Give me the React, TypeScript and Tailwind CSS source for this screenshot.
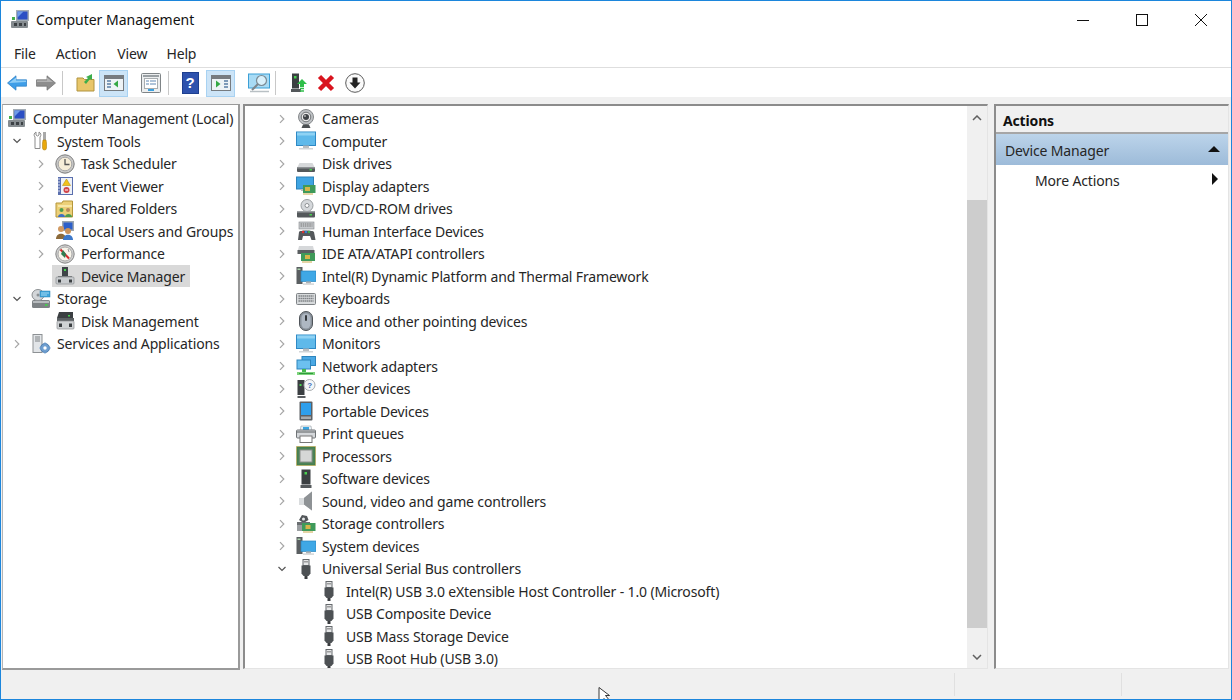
import type { ReactNode } from 'react';

type IconProps = { children: ReactNode; className?: string };

function Ico({ children, className = 'h-5 w-5 shrink-0' }: IconProps) {
  return (
    <svg viewBox="0 0 20 20" className={className}>
      {children}
    </svg>
  );
}

const MgmtIcon = () => (
  <Ico>
    <rect x="6" y="0" width="13" height="11" fill="#a3acb5" />
    <rect x="7.5" y="1.5" width="10" height="8" fill="#2b4fc4" />
    <path d="M7.5 1.5h6l-6 6z" fill="#6f9be8" />
    <rect x="1" y="11" width="17" height="7" rx="1" fill="#868c90" />
    <rect x="4" y="13" width="3" height="3" fill="#3c4145" />
    <rect x="9" y="13" width="3" height="3" fill="#3c4145" />
    <rect x="14" y="13" width="2" height="3" fill="#3c4145" />
    <rect x="2" y="7" width="3" height="3" fill="#46b04a" />
  </Ico>
);

const ToolsIcon = () => (
  <Ico>
    <path d="M5 1v3l1.5 1L8 4V1c2 1 2.5 3.5 1 5v11.5H4V6C2.5 4.500 3 2 5 1z" fill="#fff" stroke="#8b8b8b" />
    <path d="M12 1h3v8h-3z" fill="#a9a9a9" />
    <path d="M12 9h3l.5 3v5a2 2 0 0 1-4 0v-5z" fill="#e9a80c" stroke="#a87800" strokeWidth=".5" />
  </Ico>
);

const ClockIcon = () => (
  <Ico>
    <circle cx="10" cy="10" r="9.2" fill="#c9c9c9" stroke="#7c7c7c" />
    <circle cx="10" cy="10" r="6.8" fill="#f6edd8" stroke="#a7a7a7" />
    <path d="M10 5v5.500h4.500" fill="none" stroke="#555" strokeWidth="1.300" />
  </Ico>
);

const EventIcon = () => (
  <Ico>
    <rect x="3" y="1" width="15" height="18" fill="#5a6fae" />
    <rect x="6" y="2" width="11" height="16" fill="#eef1f7" />
    <path d="M3 3h2M3 6h2M3 9h2M3 12h2M3 15h2" stroke="#d8def0" />
    <path d="M11.500 3l4 6.500h-8z" fill="#f2c21b" stroke="#a88400" strokeWidth=".5" />
    <circle cx="11.500" cy="14" r="3" fill="#d1444a" />
    <path d="M10 14h3" stroke="#fff" />
  </Ico>
);

const SharedIcon = () => (
  <Ico>
    <path d="M1 4h6l1-2h9.500v16H1z" fill="#ecd078" stroke="#b5963a" />
    <rect x="3" y="6" width="14" height="2" fill="#f7e7a8" />
    <circle cx="6.500" cy="11" r="2" fill="#4d9d4d" />
    <path d="M3 18c0-4 7-4 7 0z" fill="#3f6fc2" />
    <circle cx="13" cy="11" r="2" fill="#b98a5a" />
    <path d="M10 18c0-4 7-4 7 0z" fill="#4d9d4d" />
  </Ico>
);

const UsersIcon = () => (
  <Ico>
    <rect x="7" y="0" width="12" height="10" fill="#9ca6b0" />
    <rect x="8.500" y="1.500" width="9" height="7" fill="#2c5fc9" />
    <circle cx="6" cy="8" r="3" fill="#d19a62" />
    <path d="M1 18c0-7 10-7 10 0z" fill="#8c6a3a" />
    <circle cx="13" cy="10" r="3" fill="#c9925a" />
    <path d="M8 19c0-7 10-7 10 0z" fill="#3d78c9" />
  </Ico>
);

const PerfIcon = () => (
  <Ico>
    <circle cx="10" cy="10" r="9.200" fill="#d0d0d0" stroke="#858585" />
    <circle cx="10" cy="10" r="7" fill="#f8f4ea" stroke="#a8a8a8" />
    <path d="M5.500 5.500L14 14.500" stroke="#d42a2a" strokeWidth="2" />
    <path d="M6 10l2-4 3 4-1 4z" fill="#2f7d4f" />
    <path d="M13 5l1 3" stroke="#999" />
  </Ico>
);

const DevMgrIcon = () => (
  <Ico>
    <rect x="7" y="1" width="6" height="9" fill="#3e4347" />
    <rect x="9" y="3" width="2" height="2" fill="#45d34f" />
    <rect x="3" y="10" width="14" height="1" fill="#75797c" />
    <rect x="1" y="11" width="18" height="7" rx="1" fill="#c9cccf" stroke="#8a8e91" strokeWidth=".7" />
    <rect x="3" y="13.500" width="3" height="3" fill="#3c4043" />
    <rect x="14" y="13.500" width="3" height="3" fill="#3c4043" />
  </Ico>
);

const StorageIcon = () => (
  <Ico>
    <rect x="1" y="11" width="18" height="8" rx="1.500" fill="#7d8285" />
    <rect x="2" y="12" width="16" height="2" fill="#b7bbbe" />
    <rect x="14" y="15" width="2.500" height="2" fill="#48c850" />
    <ellipse cx="7" cy="6" rx="6" ry="5.500" fill="#d3d6d9" stroke="#8b8f92" />
    <circle cx="7" cy="6" r="1.500" fill="#8d9194" />
    <rect x="9" y="2" width="10" height="6" fill="#3fa6dc" stroke="#2a7fb0" strokeWidth=".5" />
    <path d="M10 4h8M10 6h6" stroke="#d0edf9" strokeWidth=".7" />
  </Ico>
);

const DiskMgmtIcon = () => (
  <Ico>
    <path d="M4 1h14v6H2z" fill="#3b3f42" />
    <rect x="2" y="7" width="17" height="3" fill="#5b6063" />
    <rect x="13" y="4" width="2" height="1.500" fill="#46d04f" />
    <rect x="2" y="10" width="17" height="8" rx="1" fill="#cfd2d4" stroke="#8b8e91" strokeWidth=".7" />
    <rect x="4" y="12.500" width="3" height="3.500" fill="#3c4043" />
    <rect x="14" y="12.500" width="3" height="3.500" fill="#3c4043" />
  </Ico>
);

const ServicesIcon = () => (
  <Ico>
    <rect x="2" y="0.500" width="9" height="18" fill="#e2e5e8" stroke="#8d9194" />
    <path d="M4 3h5M4 5h5M4 7h5" stroke="#7e8285" />
    <circle cx="14" cy="14" r="4.500" fill="#6f9fd0" stroke="#4f7eb0" />
    <circle cx="14" cy="14" r="1.700" fill="#fff" />
    <path d="M14 8.500v2M14 17.500v2M8.500 14h2M17.500 14h2" stroke="#6f9fd0" strokeWidth="1.500" />
  </Ico>
);

const CameraIcon = () => (
  <Ico>
    <circle cx="10" cy="8" r="7.500" fill="#bfc2c5" stroke="#85888b" />
    <circle cx="10" cy="8" r="4.800" fill="#e8e8e8" stroke="#6f7376" />
    <circle cx="10" cy="8" r="3" fill="#3f4347" />
    <circle cx="9" cy="7" r=".8" fill="#fff" />
    <path d="M7 15.500h6l1.500 3.500h-9z" fill="#4c5053" />
  </Ico>
);

const MonitorIcon = () => (
  <Ico>
    <rect x="0.500" y="1" width="19" height="13.500" fill="#5fb9ea" stroke="#2e89c5" />
    <path d="M1 1.500h18v3H1z" fill="#8fd2f4" />
    <rect x="7" y="14.500" width="6" height="2.500" fill="#b9bdc0" />
    <rect x="3" y="17" width="14" height="1.500" fill="#d2d5d8" />
  </Ico>
);

const DiskIcon = () => (
  <Ico>
    <path d="M3.500 9h13l2 4H1.500z" fill="#d6d8da" />
    <rect x="1" y="13" width="18" height="5" rx="1" fill="#54585b" />
    <rect x="1" y="13" width="18" height="1.500" fill="#8d9194" />
    <rect x="13.500" y="15" width="2.500" height="1.500" fill="#48d050" />
  </Ico>
);

const DisplayIcon = () => (
  <Ico>
    <rect x="0.500" y="1" width="17" height="12" fill="#3fa4e2" stroke="#2d82b9" />
    <rect x="5" y="13" width="6" height="2" fill="#b9bdc0" />
    <rect x="7" y="9" width="12.500" height="8" fill="#3f9a5a" />
    <rect x="9" y="11" width="5" height="4" fill="#d6b54a" />
    <path d="M8 17v2M10 17v2M12 17v2M14 17v2M16 17v2" stroke="#caa84a" />
  </Ico>
);

const DvdIcon = () => (
  <Ico>
    <circle cx="11" cy="6.500" r="6" fill="#d5d8db" stroke="#9a9ea1" />
    <circle cx="11" cy="6.500" r="2" fill="#fff" stroke="#8d9194" />
    <rect x="1" y="12" width="18" height="6.500" rx="1" fill="#54585b" />
    <rect x="1" y="12" width="18" height="1.500" fill="#9a9ea1" />
    <rect x="13.500" y="15" width="2.500" height="1.500" fill="#48d050" />
  </Ico>
);

const HidIcon = () => (
  <Ico>
    <rect x="3" y="1" width="15" height="7" fill="#c6c9cc" stroke="#85898c" strokeWidth=".6" />
    <path d="M4.500 3h12M4.500 5h12" stroke="#777" strokeDasharray="1.500 .7" />
    <path d="M2 19l1-8c.3-2 14-2 15 0l1.500 8h-4l-1.500-4H7l-1 4z" fill="#54585b" />
    <circle cx="7" cy="11" r="1.200" fill="#d33" />
    <circle cx="10" cy="11" r="1.200" fill="#3a7fd0" />
    <circle cx="13" cy="11" r="1.200" fill="#3cae4c" />
  </Ico>
);

const IdeIcon = () => (
  <Ico>
    <path d="M3 2h14l1 4H2z" fill="#d6d8da" />
    <rect x="1.500" y="6" width="17" height="4" fill="#5a5e61" />
    <rect x="5" y="9" width="14" height="8" fill="#3f9a5a" />
    <rect x="9" y="11" width="5" height="4" fill="#d6b54a" />
    <path d="M7 17v2M9 17v2M11 17v2M13 17v2M15 17v2" stroke="#caa84a" />
  </Ico>
);

const SystemIcon = () => (
  <Ico>
    <rect x="0.500" y="1" width="6" height="17" fill="#5a5e61" />
    <rect x="1.500" y="2.500" width="3" height="1.500" fill="#a8d0a8" />
    <rect x="5" y="5" width="15" height="10.500" fill="#3fa8e6" stroke="#2a85bd" strokeWidth=".7" />
    <rect x="10" y="15.500" width="5" height="2" fill="#aeb2b5" />
    <rect x="7" y="17.500" width="11" height="1.200" fill="#c9ccce" />
  </Ico>
);

const KeyboardIcon = () => (
  <Ico>
    <rect x="0.500" y="4.500" width="19" height="11" rx="1" fill="#d7dadc" stroke="#7f8386" />
    <path d="M2.500 7h15M2.500 9.500h15M2.500 12h15" stroke="#777b7e" strokeWidth="1.300" strokeDasharray="1.400 .6" />
  </Ico>
);

const MouseIcon = () => (
  <Ico>
    <rect x="3.500" y="0.500" width="13" height="19" rx="6.500" fill="#8b939c" stroke="#4f5459" />
    <rect x="5.500" y="2.500" width="9" height="15" rx="4.500" fill="#aeb7c2" />
    <rect x="9" y="4" width="2" height="6" rx="1" fill="#34383c" />
  </Ico>
);

const NetworkIcon = () => (
  <Ico>
    <rect x="6" y="0.500" width="13.500" height="9" fill="#4aa8e4" stroke="#2e85bd" />
    <rect x="1" y="4" width="13.500" height="9" fill="#6cc0ef" stroke="#2e85bd" />
    <rect x="6" y="13" width="4" height="3" fill="#45b84f" />
    <rect x="1" y="16" width="18" height="3" fill="#7dd37c" />
    <path d="M3 17.500h14" stroke="#2f9a3c" />
  </Ico>
);

const OtherIcon = () => (
  <Ico>
    <rect x="1.500" y="1" width="7" height="15" fill="#3b3f42" />
    <rect x="3.500" y="5" width="2" height="2" fill="#48d050" />
    <rect x="1.500" y="17" width="8" height="2" fill="#5a5e61" />
    <circle cx="13.500" cy="6" r="5.500" fill="#f4f6f8" stroke="#a8acaf" />
    <text x="13.500" y="9" fontSize="8" fontWeight="700" fill="#3a6fb8" textAnchor="middle" fontFamily="Liberation Sans, sans-serif">?</text>
  </Ico>
);

const PortableIcon = () => (
  <Ico>
    <rect x="3.500" y="0.500" width="13" height="19" rx="1" fill="#5c6064" />
    <rect x="5" y="2" width="10" height="12" fill="#2e9fec" />
    <rect x="5" y="15.500" width="10" height="2.500" fill="#a7abae" />
  </Ico>
);

const PrintIcon = () => (
  <Ico>
    <path d="M5 2h10l1 5H4z" fill="#e8f2f8" stroke="#8d9194" strokeWidth=".5" />
    <rect x="7" y="3" width="6" height="3" fill="#3aa4e0" />
    <rect x="0.500" y="6" width="19" height="8" rx="1" fill="#d4d7da" stroke="#6f7376" />
    <rect x="4" y="12" width="12" height="6.500" fill="#fff" stroke="#777" />
    <path d="M1 8h18" stroke="#5a5e61" />
  </Ico>
);

const CpuIcon = () => (
  <Ico>
    <rect x="0.500" y="0.500" width="19" height="19" fill="#3f7d4a" stroke="#c8a23a" strokeDasharray="1 1" />
    <rect x="1.500" y="1.500" width="17" height="17" fill="#4c8256" />
    <rect x="4" y="4" width="12" height="12" fill="#d5d7d6" stroke="#8c908c" />
  </Ico>
);

const SoftwareIcon = () => (
  <Ico>
    <rect x="5.500" y="0.500" width="9" height="15" fill="#3b3f42" />
    <rect x="8.500" y="3" width="2.500" height="2.500" fill="#48d050" />
    <rect x="4.500" y="16" width="11" height="3" fill="#54585b" />
  </Ico>
);

const SoundIcon = () => (
  <Ico>
    <path d="M3 7h5l8-6.500v19L8 13.500H3z" fill="#b5b9bc" />
    <path d="M8 7l8-6.500v19L8 13.500z" fill="#8e9295" />
    <rect x="3" y="7" width="5" height="6.500" fill="#d9dcde" />
  </Ico>
);

const StorageCtlIcon = () => (
  <Ico>
    <path d="M6 1l5 1 1.500 4-5 3-4.500-3z" fill="#53575a" />
    <circle cx="7.500" cy="5" r="1.500" fill="#e6e8ea" />
    <rect x="1" y="8" width="13" height="3" fill="#6a6e71" />
    <rect x="6" y="9" width="13.500" height="8" fill="#3f9a5a" />
    <rect x="9.500" y="11" width="5" height="4" fill="#d6b54a" />
    <path d="M8 17v2M10 17v2M12 17v2M14 17v2M16 17v2" stroke="#caa84a" />
    <rect x="1" y="11" width="5" height="6" fill="#9a9ea1" />
  </Ico>
);

const UsbIcon = () => (
  <Ico>
    <rect x="7" y="0.500" width="6" height="6" fill="#e6e7e8" stroke="#65696c" />
    <rect x="8.500" y="2" width="1" height="1.500" fill="#555" />
    <rect x="10.500" y="2" width="1" height="1.500" fill="#555" />
    <path d="M5.500 6.500h9v8l-2 2.500h-5l-2-2.500z" fill="#4d5154" />
    <rect x="8.500" y="17" width="3" height="3" fill="#3a3d40" />
  </Ico>
);

type Row = { label: string; icon: ReactNode; open?: boolean; noChevron?: boolean; selected?: boolean };

const leftLevel2Top: Row[] = [
  { label: 'Task Scheduler', icon: <ClockIcon /> },
  { label: 'Event Viewer', icon: <EventIcon /> },
  { label: 'Shared Folders', icon: <SharedIcon /> },
  { label: 'Local Users and Groups', icon: <UsersIcon /> },
  { label: 'Performance', icon: <PerfIcon /> },
  { label: 'Device Manager', icon: <DevMgrIcon />, noChevron: true, selected: true },
];

const devices: Row[] = [
  { label: 'Cameras', icon: <CameraIcon /> },
  { label: 'Computer', icon: <MonitorIcon /> },
  { label: 'Disk drives', icon: <DiskIcon /> },
  { label: 'Display adapters', icon: <DisplayIcon /> },
  { label: 'DVD/CD-ROM drives', icon: <DvdIcon /> },
  { label: 'Human Interface Devices', icon: <HidIcon /> },
  { label: 'IDE ATA/ATAPI controllers', icon: <IdeIcon /> },
  { label: 'Intel(R) Dynamic Platform and Thermal Framework', icon: <SystemIcon /> },
  { label: 'Keyboards', icon: <KeyboardIcon /> },
  { label: 'Mice and other pointing devices', icon: <MouseIcon /> },
  { label: 'Monitors', icon: <MonitorIcon /> },
  { label: 'Network adapters', icon: <NetworkIcon /> },
  { label: 'Other devices', icon: <OtherIcon /> },
  { label: 'Portable Devices', icon: <PortableIcon /> },
  { label: 'Print queues', icon: <PrintIcon /> },
  { label: 'Processors', icon: <CpuIcon /> },
  { label: 'Software devices', icon: <SoftwareIcon /> },
  { label: 'Sound, video and game controllers', icon: <SoundIcon /> },
  { label: 'Storage controllers', icon: <StorageCtlIcon /> },
  { label: 'System devices', icon: <SystemIcon /> },
  { label: 'Universal Serial Bus controllers', icon: <UsbIcon />, open: true },
];

const usbDevices = [
  'Intel(R) USB 3.0 eXtensible Host Controller - 1.0 (Microsoft)',
  'USB Composite Device',
  'USB Mass Storage Device',
  'USB Root Hub (USB 3.0)',
];

function Chevron({ open = false }: { open?: boolean }) {
  return (
    <svg viewBox="0 0 10 10" className="h-[10px] w-[10px] shrink-0">
      {open ? (
        <path d="M1.500 3l3.500 3.500L8.500 3" fill="none" stroke="#555" strokeWidth="1.200" />
      ) : (
        <path d="M3 1.200L6.800 5 3 8.800" fill="none" stroke="#a6a6a6" strokeWidth="1.200" />
      )}
    </svg>
  );
}

function LeftRow({ row, level }: { row: Row; level: 1 | 2 }) {
  return (
    <div className={`flex h-[22.5px] items-center ${level === 1 ? 'pl-[9px]' : 'pl-[33px]'}`}>
      {row.noChevron ? (
        <span className="w-[10px] shrink-0" />
      ) : (
        <Chevron open={row.open} />
      )}
      <div
        className={`flex h-[22.5px] items-center pr-[5px] ${
          row.selected ? 'bg-[#d9d9d9]' : ''
        } ${level === 1 ? 'ml-[8px] pl-[1px]' : 'ml-[6px] pl-[3px]'}`}
      >
        {row.icon}
        <span className="ml-[6px] whitespace-nowrap">{row.label}</span>
      </div>
    </div>
  );
}

function DeviceRow({ row }: { row: Row }) {
  return (
    <div className="flex h-[22.5px] items-center pl-[32px]">
      <Chevron open={row.open} />
      <span className="ml-[9px]">{row.icon}</span>
      <span className="ml-[6px] whitespace-nowrap">{row.label}</span>
    </div>
  );
}

function ToolBtn({ children, active = false, className = '' }: { children: ReactNode; active?: boolean; className?: string }) {
  return (
    <div
      className={`flex h-[27px] items-center justify-center ${
        active ? 'border border-[#a8d2f2] bg-[#cce4f7]' : ''
      } ${className}`}
    >
      {children}
    </div>
  );
}

const Sep = ({ className = '' }: { className?: string }) => (
  <div className={`h-[24px] w-px bg-[#c8c8c8] ${className}`} />
);

export default function App() {
  return (
    <div className="relative flex h-[700px] w-[1232px] flex-col overflow-hidden border border-[#1c86dc] bg-white font-['Noto_Sans','Open_Sans',sans-serif] text-[14px] tracking-[-0.15px] text-[#262626]">
      {/* title bar */}
      <div className="flex h-[37px] items-center">
        <span className="ml-[9px]"><MgmtIcon /></span>
        <span className="ml-[6px] tracking-[0px] text-[#111]">Computer Management</span>
        <div className="ml-auto flex items-center">
          <svg viewBox="0 0 12 12" className="mr-[47px] h-[12px] w-[12px]"><path d="M0 6.500h12" stroke="#111" /></svg>
          <svg viewBox="0 0 12 12" className="mr-[47px] h-[12px] w-[12px]"><rect x=".5" y=".5" width="11" height="11" fill="none" stroke="#111" /></svg>
          <svg viewBox="0 0 12 12" className="mr-[24px] h-[12px] w-[12px]"><path d="M0 0l12 12M12 0L0 12" stroke="#111" /></svg>
        </div>
      </div>

      {/* menu */}
      <div className="flex h-[29px] items-center pl-[13px] pt-[1px]">
        <span>File</span>
        <span className="ml-[20px]">Action</span>
        <span className="ml-[21px]">View</span>
        <span className="ml-[19px]">Help</span>
      </div>

      {/* toolbar */}
      <div className="flex h-[30px] items-center border-t border-[#dedede] pl-[4px] pt-[1px]">
        <ToolBtn className="w-[24px]">
          <svg viewBox="0 0 20 16" className="h-[16px] w-[20px]">
            <path d="M0.500 8L9 .8v4h10.500v6.400H9v4z" fill="#3f9ee8" stroke="#2a7cc4" strokeWidth=".7" />
            <path d="M2 8L9 2.500v3h10v1.500z" fill="#8fcdf6" />
          </svg>
        </ToolBtn>
        <ToolBtn className="ml-[5px] w-[24px]">
          <svg viewBox="0 0 20 16" className="h-[16px] w-[20px]">
            <path d="M19.500 8L11 .8v4H.5v6.400H11v4z" fill="#8d8d8d" stroke="#6f6f6f" strokeWidth=".7" />
            <path d="M1 5.500h10v-3l6 4.500H1z" fill="#b2b2b2" />
          </svg>
        </ToolBtn>
        <Sep className="ml-[4px]" />
        <ToolBtn className="ml-[11px] w-[24px]">
          <svg viewBox="0 0 20 20" className="h-[20px] w-[20px]">
            <path d="M1 5h6l1.500 1.500H18V18H1z" fill="#e8c66a" stroke="#b0933f" />
            <path d="M8 9l4-4-2-1 6-3v6l-2-1-4 5z" fill="#3cae4c" />
          </svg>
        </ToolBtn>
        <ToolBtn active className="ml-[1px] w-[29px]">
          <svg viewBox="0 0 20 16" className="h-[16px] w-[20px]">
            <rect x=".5" y=".5" width="19" height="15" fill="#eef3f6" stroke="#767b80" />
            <rect x="1" y="1" width="18" height="3" fill="#767b80" />
            <path d="M3 6h4M3 9h4M3 12h4" stroke="#5a7fa5" strokeWidth="1.500" />
            <path d="M14 5.500v7L9.500 9z" fill="#35a845" />
          </svg>
        </ToolBtn>
        <ToolBtn className="ml-[13px] w-[20px]">
          <svg viewBox="0 0 20 20" className="h-[20px] w-[20px]">
            <rect x=".5" y=".5" width="19" height="19" rx="1" fill="#eceeef" stroke="#7f8487" />
            <rect x="2" y="2" width="16" height="2" fill="#9aa0a4" />
            <rect x="3.500" y="5.500" width="13" height="10" fill="#fff" stroke="#a8adb0" />
            <path d="M5 8h3M9 8h6M5 11h3M9 11h6" stroke="#5f87b3" />
            <rect x="7" y="16" width="6" height="2" fill="#3aa0e0" />
          </svg>
        </ToolBtn>
        <Sep className="ml-[7px]" />
        <ToolBtn className="ml-[12px] w-[18px]">
          <div className="flex h-[22px] w-[17px] items-center justify-center border border-[#1e3f8f] bg-[#2e52ad] font-['Liberation_Sans',sans-serif] text-[15px] font-bold text-white">?</div>
        </ToolBtn>
        <ToolBtn active className="ml-[7px] w-[29px]">
          <svg viewBox="0 0 20 16" className="h-[16px] w-[20px]">
            <rect x=".5" y=".5" width="19" height="15" fill="#eef3f6" stroke="#767b80" />
            <rect x="1" y="1" width="18" height="3" fill="#767b80" />
            <path d="M13 6h4M13 9h4M13 12h4" stroke="#5a7fa5" strokeWidth="1.500" />
            <path d="M5 5.500v7L9.500 9z" fill="#35a845" />
          </svg>
        </ToolBtn>
        <ToolBtn className="ml-[13px] w-[23px]">
          <svg viewBox="0 0 23 20" className="h-[20px] w-[23px]">
            <rect x=".5" y="1" width="21" height="14" fill="#a8dbf5" stroke="#3b9fd6" />
            <circle cx="13.500" cy="7.500" r="5" fill="#d8f0fb" stroke="#7a8a94" strokeWidth="1.200" />
            <path d="M10 11L4 17" stroke="#7d868c" strokeWidth="2" />
            <path d="M2 18.500h19" stroke="#b9c0c4" strokeWidth="1.500" />
          </svg>
        </ToolBtn>
        <Sep className="ml-[4px]" />
        <ToolBtn className="ml-[15px] w-[17px]">
          <svg viewBox="0 0 17 20" className="h-[20px] w-[17px]">
            <rect x="1" y=".5" width="7" height="15" fill="#3b3f42" />
            <rect x="3" y="3" width="2.500" height="2.500" fill="#48d050" />
            <rect x="0" y="16" width="10" height="3" fill="#54585b" />
            <path d="M6 11l5-5 5 5h-3v3H9v-3z" fill="#2fbf4a" />
            <path d="M9 15.500h4M9 18h4" stroke="#2fbf4a" strokeWidth="1.300" />
          </svg>
        </ToolBtn>
        <ToolBtn className="ml-[9px] w-[18px]">
          <svg viewBox="0 0 18 18" className="h-[18px] w-[18px]">
            <path d="M2.500 2.500L15.500 15.500M15.500 2.500L2.500 15.500" stroke="#d9141e" strokeWidth="4.500" />
          </svg>
        </ToolBtn>
        <ToolBtn className="ml-[10px] w-[20px]">
          <svg viewBox="0 0 20 20" className="h-[20px] w-[20px]">
            <circle cx="10" cy="10" r="9.300" fill="#fafafa" stroke="#5a5a5a" />
            <path d="M7.500 4.500h5v5h3L10 15.500 4.500 9.500h3z" fill="#222" />
          </svg>
        </ToolBtn>
      </div>

      {/* panes */}
      <div className="flex min-h-0 flex-1 bg-[#f0f0f0] pl-px pr-[2px] pt-[7px]">
        <div className="w-[238px] overflow-hidden border-y border-r-2 border-l border-[#9a9a9a] border-b-2 border-l-[#b5b5b5] bg-white pt-[2.25px]">
          <div className="flex h-[22.5px] items-center pl-[4px]">
            <MgmtIcon />
            <span className="ml-[6px] whitespace-nowrap">Computer Management (Local)</span>
          </div>
          <LeftRow level={1} row={{ label: 'System Tools', icon: <ToolsIcon />, open: true }} />
          {leftLevel2Top.map((row) => (
            <LeftRow key={row.label} level={2} row={row} />
          ))}
          <LeftRow level={1} row={{ label: 'Storage', icon: <StorageIcon />, open: true }} />
          <LeftRow level={2} row={{ label: 'Disk Management', icon: <DiskMgmtIcon />, noChevron: true }} />
          <LeftRow level={1} row={{ label: 'Services and Applications', icon: <ServicesIcon /> }} />
        </div>

        <div className="ml-[3px] mb-[1px] flex w-[745px] overflow-hidden border-t-2 border-l-2 border-b border-r border-[#e4e4e4] border-t-[#8c8c8c] border-l-[#8c8c8c] bg-white">
          <div className="min-w-0 flex-1 overflow-hidden pt-[1.25px]">
            {devices.map((row) => (
              <DeviceRow key={row.label} row={row} />
            ))}
            {usbDevices.map((label) => (
              <div key={label} className="flex h-[22.5px] items-center pl-[74px]">
                <UsbIcon />
                <span className="ml-[7px] whitespace-nowrap">{label}</span>
              </div>
            ))}
          </div>
          <div className="flex w-[20px] shrink-0 flex-col bg-[#f0f0f0]">
            <div className="flex h-[22px] items-center justify-center pt-[2px]">
              <svg viewBox="0 0 10 6" className="h-[6px] w-[10px]"><path d="M1 5l4-4 4 4" fill="none" stroke="#606060" strokeWidth="1.500" /></svg>
            </div>
            <div className="h-[72px]" />
            <div className="h-[428px] bg-[#cdcdcd]" />
            <div className="flex-1" />
            <div className="flex h-[22px] items-center justify-center">
              <svg viewBox="0 0 10 6" className="h-[6px] w-[10px]"><path d="M1 1l4 4 4-4" fill="none" stroke="#606060" strokeWidth="1.500" /></svg>
            </div>
          </div>
        </div>

        <div className="ml-[6px] mb-[1px] w-[235px] overflow-hidden border-t-2 border-l-2 border-b border-r border-[#e4e4e4] border-t-[#8c8c8c] border-l-[#8c8c8c] bg-white">
          <div className="flex h-[28px] items-center border-b-2 border-[#a6a6a6] bg-[#f0f0f0] pl-[7px] pt-[2px] font-bold text-[#111]">
            Actions
          </div>
          <div className="flex h-[31px] items-center justify-between bg-gradient-to-b from-[#bcd4ea] to-[#9dbbd9] pl-[9px] pr-[8px] pt-[2px]">
            <span>Device Manager</span>
            <span className="mb-[3px] h-0 w-0 border-x-[6px] border-b-[6px] border-x-transparent border-b-[#111]" />
          </div>
          <div className="flex h-[31px] items-center justify-between pl-[39px] pr-[10px]">
            <span>More Actions</span>
            <span className="mb-[4px] h-0 w-0 border-y-[6px] border-l-[6px] border-y-transparent border-l-[#111]" />
          </div>
        </div>
      </div>

      {/* status bar */}
      <div className="flex h-[29px] bg-[#f0f0f0] py-[3px]">
        <div className="w-[954px] border-r border-[#e0e0e0]" />
        <div className="w-[167px] border-r border-[#e0e0e0]" />
      </div>

      {/* mouse pointer */}
      <svg viewBox="0 0 14 14" className="absolute left-[597px] top-[686px] h-[14px] w-[14px]">
        <path d="M1 0.500V14h3l2-2.500 2 2.500h4L7.500 8.500H11.500z" fill="#fff" stroke="#222" strokeWidth=".9" />
      </svg>
    </div>
  );
}
